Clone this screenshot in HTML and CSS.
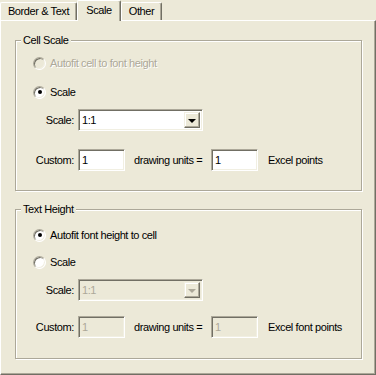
FILE: index.html
```html
<!DOCTYPE html>
<html lang="en">
<head>
    <meta charset="UTF-8">
    <title>Scale</title>
    <link rel="stylesheet" href="styles.css">
</head>
<body>
    <div class="tabs">
        <div class="tab tab-first">Border &amp; Text</div>
        <div class="tab tab-active">Scale</div>
        <div class="tab tab-other">Other</div>
    </div>

    <div class="panel">
        <!-- Cell Scale group -->
        <fieldset class="group group-cell">
            <legend>Cell Scale</legend>
            <label class="radio-row row-first disabled"><span class="radio"></span>Autofit cell to font height</label>
            <label class="radio-row row-second"><span class="radio checked"></span>Scale</label>
            <div class="field-row row-select">
                <span class="field-label">Scale:</span>
                <div class="select">
                    <span class="select-value">1:1</span>
                    <span class="select-btn"><span class="arrow"></span></span>
                </div>
            </div>
            <div class="field-row row-custom">
                <span class="field-label">Custom:</span>
                <div class="textbox">1</div>
                <span class="units">drawing units =</span>
                <div class="textbox">1</div>
                <span class="after">Excel points</span>
            </div>
        </fieldset>

        <!-- Text Height group -->
        <fieldset class="group group-text">
            <legend>Text Height</legend>
            <label class="radio-row row-first"><span class="radio checked"></span>Autofit font height to cell</label>
            <label class="radio-row row-second"><span class="radio"></span>Scale</label>
            <div class="field-row row-select">
                <span class="field-label">Scale:</span>
                <div class="select off">
                    <span class="select-value">1:1</span>
                    <span class="select-btn"><span class="arrow"></span></span>
                </div>
            </div>
            <div class="field-row row-custom">
                <span class="field-label">Custom:</span>
                <div class="textbox off">1</div>
                <span class="units">drawing units =</span>
                <div class="textbox off">1</div>
                <span class="after">Excel font points</span>
            </div>
        </fieldset>
    </div>
</body>
</html>
```

FILE: styles.css
```css
/* Page */
body {
    margin: 0;
    background: #ece9d8;
    font-family: "Liberation Sans", Arial, sans-serif;
    font-size: 11px;
    letter-spacing: -0.4px;
    color: #000;
}

/* Tab strip */
.tabs {
    display: flex;
    align-items: flex-end;
    height: 20px;
}

.tab {
    box-sizing: border-box;
    height: 18px;
    line-height: 16px;
    text-align: center;
    background: #ece9d8;
    border-top: 1px solid #fff;
    border-left: 1px solid #fff;
    border-right: 1px solid #716f64;
    box-shadow: inset -1px 0 #aca899;
    border-radius: 2px 2px 0 0;
}

.tab-first {
    width: 77px;
}

.tab-active {
    position: relative;
    z-index: 1;
    width: 44px;
    height: 21px;
    margin-bottom: -1px;
    line-height: 18px;
}

.tab-other {
    width: 41px;
}

/* Tab page */
.panel {
    box-sizing: border-box;
    height: 355px;
    border-top: 1px solid #fff;
    border-left: 1px solid #fff;
    border-right: 1px solid #716f64;
    border-bottom: 1px solid #716f64;
    box-shadow: inset -1px -1px #aca899;
    padding-top: 12px;
}

/* Group boxes */
.group {
    box-sizing: border-box;
    width: 347px;
    margin: 0 0 0 14px;
    padding: 0;
    border: 1px solid #aca899;
    box-shadow: inset 1px 1px #fff, 1px 1px #fff;
    min-width: 0;
}

.group legend {
    margin-left: 5px;
    padding: 0 2px;
    line-height: 14px;
    background: #ece9d8;
}

.group-cell {
    padding-bottom: 19px;
}

.group-text {
    margin-top: 11px;
    padding-bottom: 20px;
}

/* Radio rows */
.radio-row {
    display: flex;
    align-items: center;
    height: 16px;
    margin-left: 17px;
}

.group-cell .row-first { margin-top: 8px; }
.group-cell .row-second { margin-top: 13px; }
.group-text .row-first { margin-top: 11px; }
.group-text .row-second { margin-top: 11px; }

.radio {
    box-sizing: border-box;
    display: flex;
    align-items: center;
    justify-content: center;
    width: 13px;
    height: 13px;
    margin-right: 4px;
    border-radius: 50%;
    background: #fff;
    border: 1px solid;
    border-color: #aca899 #fff #fff #aca899;
    box-shadow: inset 1px 1px #716f64, inset -1px -1px #f1efe2;
}

.radio.checked::after {
    content: "";
    width: 4px;
    height: 4px;
    border-radius: 50%;
    background: #000;
}

.disabled {
    color: #aca899;
    text-shadow: 1px 1px #fff;
}

.disabled .radio {
    background: #ece9d8;
}

/* Label + control rows */
.field-row {
    display: flex;
    align-items: center;
    height: 22px;
    margin-left: 14px;
}

.group-cell .row-select { margin-top: 9px; }
.group-cell .row-custom { margin-top: 18px; }
.group-text .row-select { margin-top: 9px; }
.group-text .row-custom { margin-top: 15px; }

.field-label {
    width: 44px;
    margin-right: 4px;
    text-align: right;
}

.select,
.textbox {
    box-sizing: border-box;
    height: 22px;
    background: #fff;
    border: 1px solid;
    border-color: #aca899 #fff #fff #aca899;
    box-shadow: inset 1px 1px #716f64, inset -1px -1px #f1efe2;
}

.select {
    display: flex;
    align-items: center;
    justify-content: space-between;
    width: 125px;
    padding: 0 2px 0 3px;
}

.select-btn {
    box-sizing: border-box;
    display: flex;
    align-items: center;
    justify-content: center;
    width: 16px;
    height: 16px;
    background: #ece9d8;
    border: 1px solid;
    border-color: #f1efe2 #716f64 #716f64 #f1efe2;
    box-shadow: inset -1px -1px #aca899, inset 1px 1px #fff;
}

.arrow {
    width: 0;
    height: 0;
    border-left: 4px solid transparent;
    border-right: 4px solid transparent;
    border-top: 4px solid #000;
    margin-top: 1px;
}

.textbox {
    width: 47px;
    line-height: 20px;
    padding-left: 3px;
}

.units {
    width: 77px;
    margin-left: 9px;
}

.after {
    margin-left: 10px;
}

/* Disabled controls */
.off {
    background: #ece9d8;
    color: #aca899;
}

.off .arrow {
    border-top-color: #aca899;
}
```
